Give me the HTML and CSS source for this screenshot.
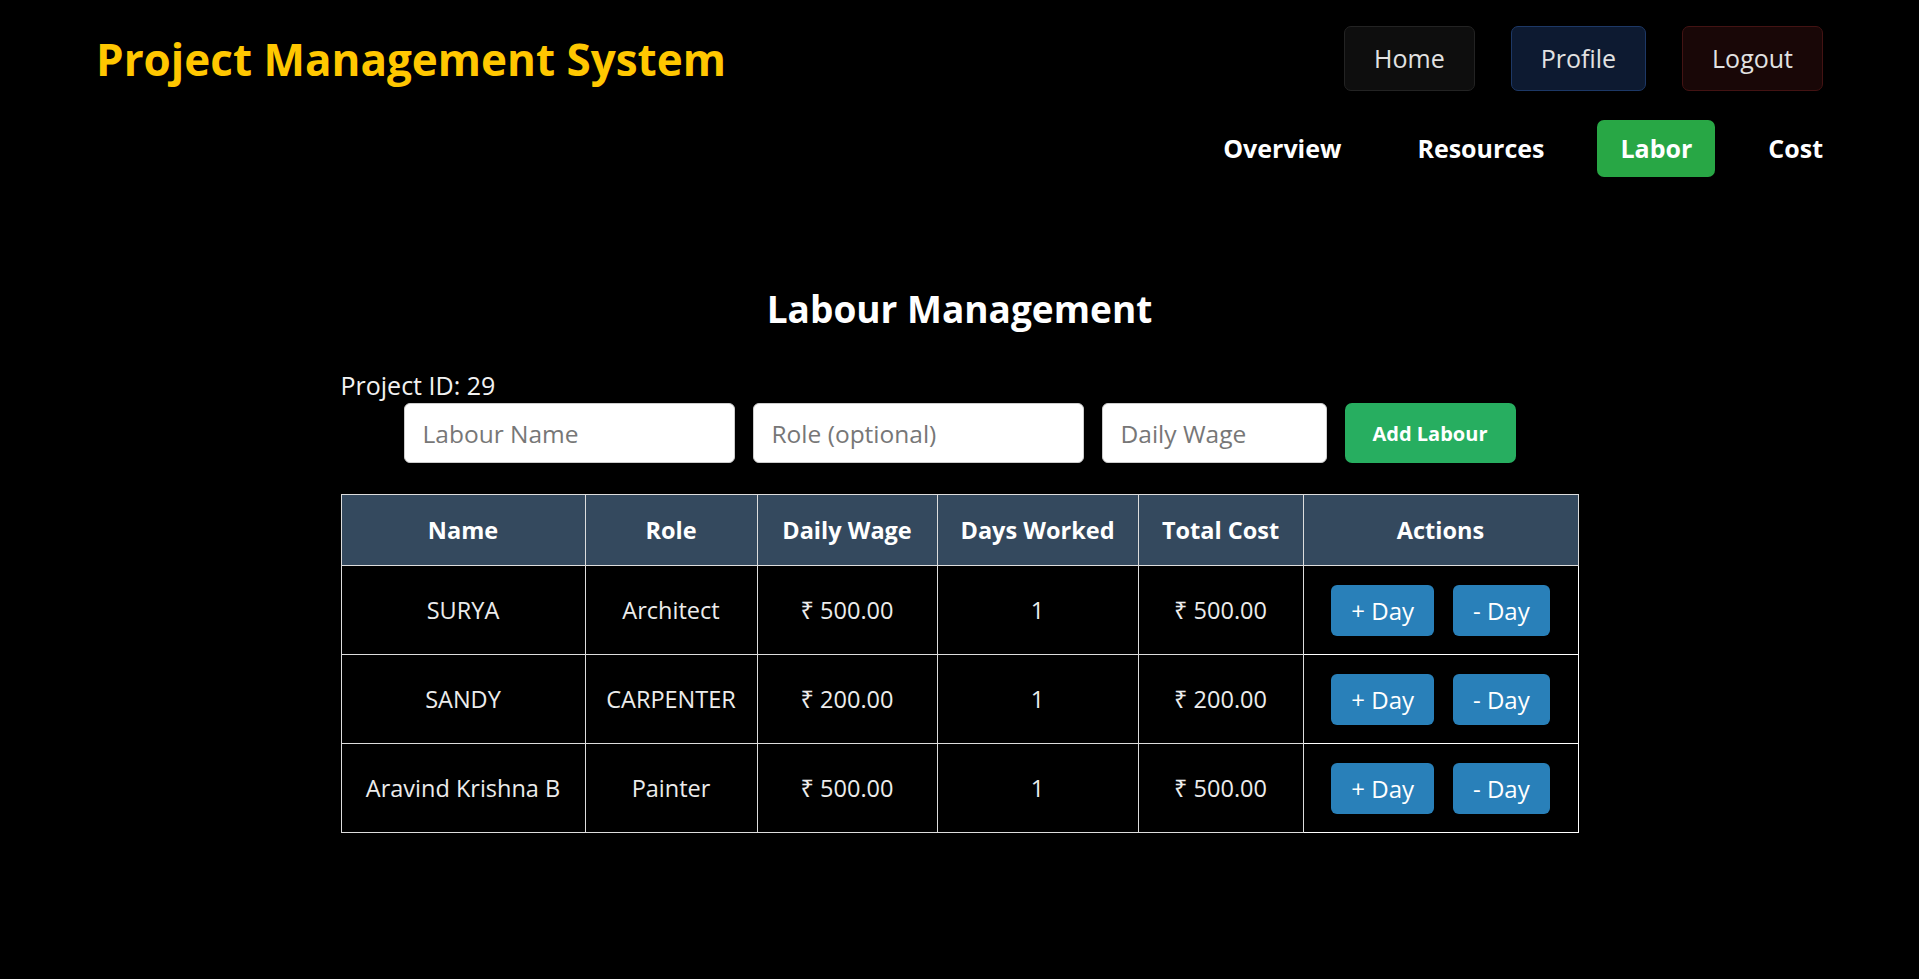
FILE: index.html
```html
<!DOCTYPE html>
<html lang="en">
<head>
<meta charset="utf-8">
<title>Project Management System</title>
<link rel="stylesheet" href="styles.css">
</head>
<body>
<header class="site-header">
  <div class="top-row">
    <h1 class="brand">Project Management System</h1>
    <nav class="top-actions">
      <a class="top-btn btn-home" href="#">Home</a>
      <a class="top-btn btn-profile" href="#">Profile</a>
      <a class="top-btn btn-logout" href="#">Logout</a>
    </nav>
  </div>
  <nav class="tabs">
    <a class="tab" href="#">Overview</a>
    <a class="tab" href="#">Resources</a>
    <a class="tab active" href="#">Labor</a>
    <a class="tab" href="#">Cost</a>
  </nav>
</header>

<main class="labour">
  <h2 class="labour-title">Labour Management</h2>
  <p class="project-id">Project ID: 29</p>
  <form class="add-form">
    <input class="field field-name" type="text" placeholder="Labour Name">
    <input class="field field-role" type="text" placeholder="Role (optional)">
    <input class="field field-wage" type="text" placeholder="Daily Wage">
    <button class="add-btn" type="button">Add Labour</button>
  </form>

  <table class="labour-table">
    <colgroup>
      <col class="c-name"><col class="c-role"><col class="c-wage"><col class="c-days"><col class="c-total"><col class="c-actions">
    </colgroup>
    <thead>
      <tr><th>Name</th><th>Role</th><th>Daily Wage</th><th>Days Worked</th><th>Total Cost</th><th>Actions</th></tr>
    </thead>
    <tbody>
      <tr>
        <td>SURYA</td><td>Architect</td><td>₹ 500.00</td><td>1</td><td>₹ 500.00</td>
        <td class="actions"><div class="act-wrap"><button class="day-btn" type="button">+ Day</button><button class="day-btn" type="button">- Day</button></div></td>
      </tr>
      <tr>
        <td>SANDY</td><td>CARPENTER</td><td>₹ 200.00</td><td>1</td><td>₹ 200.00</td>
        <td class="actions"><div class="act-wrap"><button class="day-btn" type="button">+ Day</button><button class="day-btn" type="button">- Day</button></div></td>
      </tr>
      <tr>
        <td>Aravind Krishna B</td><td>Painter</td><td>₹ 500.00</td><td>1</td><td>₹ 500.00</td>
        <td class="actions"><div class="act-wrap"><button class="day-btn" type="button">+ Day</button><button class="day-btn" type="button">- Day</button></div></td>
      </tr>
    </tbody>
  </table>
</main>
</body>
</html>
```

FILE: styles.css
```css
* { box-sizing: border-box; }

html, body {
  margin: 0;
  padding: 0;
  background: #000;
  color: #fff;
  font-family: "Open Sans", "Noto Sans", sans-serif;
}

a { text-decoration: none; }

.site-header {
  width: 1727px;
  margin: 0 auto;
  padding-top: 26px;
}

.top-row {
  display: flex;
  align-items: center;
  justify-content: space-between;
}

.brand {
  margin: 0;
  font-size: 44px;
  line-height: 50px;
  font-weight: 700;
  color: #ffc700;
}

.top-actions {
  display: flex;
  gap: 36px;
}

.top-btn {
  display: block;
  height: 65px;
  padding: 0 29px;
  line-height: 63px;
  font-size: 25px;
  font-weight: 500;
  color: #e2e2e2;
  border-radius: 7px;
  border: 1px solid #222;
}

.btn-home { background: #0e0e0e; border-color: #232323; }
.btn-profile { background: #0d1a31; border-color: #1d3866; }
.btn-logout { background: #190707; border-color: #431313; }

.tabs {
  display: flex;
  justify-content: flex-end;
  gap: 30px;
  margin-top: 29px;
  margin-right: -23px;
}

.tab {
  display: block;
  height: 57px;
  padding: 0 23px;
  line-height: 57px;
  font-size: 25px;
  font-weight: 700;
  color: #fff;
  border-radius: 7px;
}

.tab.active { background: #28a745; }

.labour {
  width: 1238px;
  margin: 0 auto;
  padding-top: 110px;
}

.labour-title {
  margin: 0;
  text-align: center;
  font-size: 37px;
  line-height: 44px;
  font-weight: 700;
}

.project-id {
  margin: 39px 0 0;
  font-size: 25px;
  line-height: 30px;
  color: #f2f2f2;
}

.add-form {
  display: flex;
  justify-content: center;
  gap: 18px;
  margin-top: 3px;
}

.field {
  height: 60px;
  padding: 0 18px;
  font-family: inherit;
  font-size: 24.5px;
  color: #333;
  background: #fff;
  border: 1px solid #ccc;
  border-radius: 6px;
  outline: none;
}

.field::placeholder { color: #777; }

.field-name, .field-role { width: 331px; }
.field-wage { width: 225px; }

.add-btn {
  width: 171px;
  height: 60px;
  font-family: inherit;
  font-size: 20px;
  font-weight: 700;
  color: #fff;
  background: #27ae60;
  border: none;
  border-radius: 7px;
}

.labour-table {
  margin-top: 31px;
  width: 1237px;
  table-layout: fixed;
  border-collapse: collapse;
}

.c-name { width: 244px; }
.c-role { width: 172px; }
.c-wage { width: 180px; }
.c-days { width: 201px; }
.c-total { width: 165px; }
.c-actions { width: 275px; }

.labour-table th,
.labour-table td {
  border: 1px solid #ddd;
  text-align: center;
  padding: 0 4px;
}

.labour-table th {
  height: 71px;
  background: #34495e;
  color: #fff;
  font-size: 23.5px;
  font-weight: 700;
}

.labour-table td {
  height: 89px;
  font-size: 23.5px;
  color: #ececec;
}

.labour-table td.actions { border-color: #fff; }

.act-wrap {
  display: flex;
  justify-content: center;
  gap: 19px;
}

.day-btn {
  height: 51px;
  padding: 0 20px;
  font-family: inherit;
  font-size: 24px;
  font-weight: 500;
  color: #fff;
  background: #2980b9;
  border: none;
  border-radius: 6px;
}
```
